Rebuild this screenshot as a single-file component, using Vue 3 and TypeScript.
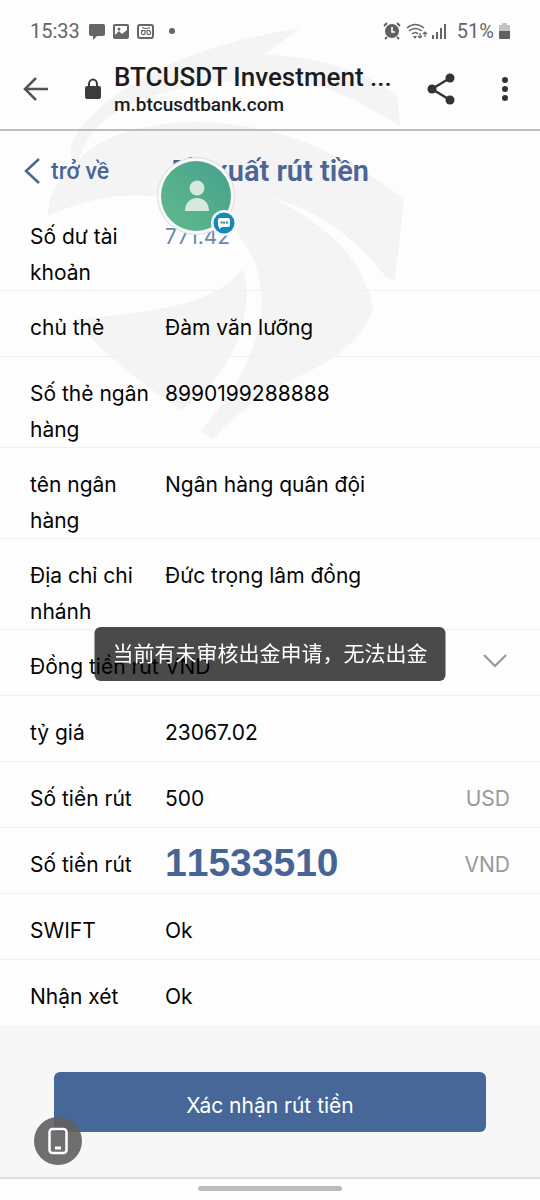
<script setup lang="ts">
import { ref } from 'vue'

type Kind = 'balance' | 'input' | 'select' | 'text' | 'total'

interface Field {
  id: string
  label: string
  value: string
  kind: Kind
  unit?: string
}

const fields = ref<Field[]>([
  { id: 'balance', label: 'Số dư tài khoản', value: '771.42', kind: 'balance' },
  { id: 'holder', label: 'chủ thẻ', value: 'Đàm văn lưỡng', kind: 'input' },
  { id: 'card', label: 'Số thẻ ngân hàng', value: '8990199288888', kind: 'input' },
  { id: 'bank', label: 'tên ngân hàng', value: 'Ngân hàng quân đội', kind: 'input' },
  { id: 'branch', label: 'Địa chỉ chi nhánh', value: 'Đức trọng lâm đồng', kind: 'input' },
  { id: 'currency', label: 'Đồng tiền rút', value: 'VND', kind: 'select' },
  { id: 'rate', label: 'tỷ giá', value: '23067.02', kind: 'text' },
  { id: 'amount', label: 'Số tiền rút', value: '500', kind: 'input', unit: 'USD' },
  { id: 'total', label: 'Số tiền rút', value: '11533510', kind: 'total', unit: 'VND' },
  { id: 'swift', label: 'SWIFT', value: 'Ok', kind: 'input' },
  { id: 'note', label: 'Nhận xét', value: 'Ok', kind: 'input' },
])
</script>

<template>
  <div class="screen">
    <svg class="watermark" width="420" height="450" viewBox="0 0 420 450" aria-hidden="true">
      <g fill="#f4f4f4">
        <path d="M300 28C240 38 190 52 145 77C105 99 78 125 71 146C69 158 74 164 79 160C84 137 104 116 134 103C178 84 240 78 292 80C335 86 365 105 400 126L397 95C367 72 315 55 264 55Z" />
        <path d="M79 160C100 136 145 122 195 122C275 122 345 153 404 199L395 280L386 277C352 234 318 211 270 197C320 220 350 250 362 277C369 292 373 302 373 311C360 341 335 359 304 374C273 388 242 407 213 439L200 431C237 390 261 347 262 300C260 247 228 214 180 200C134 190 91 196 48 216C48 193 60 175 79 160Z" />
        <path d="M243 269C217 300 175 311 76 319C93 344 119 365 151 389L181 410C222 383 247 339 247 286Z" />
      </g>
    </svg>

    <div class="status">
      <span>15:33</span>
      <svg class="notices" width="90" height="20" viewBox="0 0 90 20" aria-hidden="true">
        <path fill="#666" d="M2 3h13q2 0 2 2v8q0 2-2 2H9l-4 4v-4H3q-2 0-2-2V5q0-2 1-2z" />
        <path fill="#666" fill-rule="evenodd" d="M27 3h12q2 0 2 2v11q0 2-2 2H27q-2 0-2-2V5q0-2 2-2zm0 2v9l4-4 3 3 5-4V5z" />
        <circle cx="31" cy="8" r="1.5" fill="#666" />
        <rect x="50" y="4" width="15" height="13" rx="2" fill="none" stroke="#666" stroke-width="2" />
        <path fill="none" stroke="#666" stroke-width="1.200" d="M54 6.500l3 1h2l3-1M53 9.500h4v2a1.800 1.800 0 1 1-2-1.500M62 9.500h-3v2a1.800 1.800 0 1 0 2-1.500" />
        <circle cx="84" cy="10" r="3" fill="#666" />
      </svg>
      <svg class="signals" width="66" height="20" viewBox="0 0 66 20" aria-hidden="true">
        <circle cx="9" cy="10" r="7" fill="#606060" />
        <path d="M9 6v5h3" fill="none" stroke="#fff" stroke-width="1.600" />
        <path d="M1 5l3-3M14 2l3 3M4 16l-2 2M14 16l2 2" stroke="#606060" stroke-width="1.800" />
        <path d="M24 7q8-7 17 0M26 10q6-5 13 0M29 13q4-3 6 0" fill="none" stroke="#666" stroke-width="1.500" />
        <path d="M30 15h4l-2 3z" fill="#666" />
        <path d="M37 12v5M35 15l2 2 2-2M42 16v-5M40 13l2-2 2 2" fill="none" stroke="#666" stroke-width="1.200" />
        <path d="M50 14v4M54 11v7M58 7v11M62 3v15" stroke="#666" stroke-width="2" />
      </svg>
      <span>51%</span>
      <svg class="battery" width="11" height="17" viewBox="0 0 11 17" aria-hidden="true">
        <path d="M3 0h5v2h3v6H0V2h3z" fill="#c4c4c4" />
        <path d="M0 8h11v7q0 1-1 1H1q-1 0-1-1z" fill="#606060" />
      </svg>
    </div>

    <header class="browser">
      <button class="icon" type="button" aria-label="Back">
        <svg width="26" height="24" viewBox="0 0 26 24"><path d="M13 1L2 12l11 11M2 12h23" fill="none" stroke="#555" stroke-width="2.500" /></svg>
      </button>
      <svg class="lock" width="18" height="22" viewBox="0 0 18 22" aria-hidden="true">
        <path d="M5 9V6a4 4.500 0 0 1 8 0v3" fill="none" stroke="#3c3c3c" stroke-width="2" />
        <rect x="1" y="8" width="16" height="13" rx="2" fill="#3c3c3c" />
      </svg>
      <div class="site">
        <div class="site-title">BTCUSDT Investment ...</div>
        <div class="site-url">m.btcusdtbank.com</div>
      </div>
      <button class="icon" type="button" aria-label="Share">
        <svg width="28" height="32" viewBox="0 0 28 32">
          <path d="M23 5L5 16l18 11" fill="none" stroke="#333" stroke-width="2.500" />
          <g fill="#333"><circle cx="23" cy="5" r="4.500" /><circle cx="5" cy="16" r="4.500" /><circle cx="23" cy="27" r="4.500" /></g>
        </svg>
      </button>
      <button class="icon more" type="button" aria-label="Menu">
        <svg width="8" height="26" viewBox="0 0 8 26" fill="#333"><circle cx="4" cy="4" r="3" /><circle cx="4" cy="13" r="3" /><circle cx="4" cy="22" r="3" /></svg>
      </button>
    </header>

    <nav class="page-head">
      <a class="return" href="#">
        <svg width="17" height="28" viewBox="0 0 17 28" aria-hidden="true"><path d="M15 2L2 14l13 12" fill="none" stroke="#4c6597" stroke-width="2.500" /></svg>
        trở về
      </a>
      <h1>Đề xuất rút tiền</h1>
    </nav>

    <form @submit.prevent>
      <div v-for="f in fields" :key="f.id" class="row">
        <label :for="f.id">{{ f.label }}</label>
        <input v-if="f.kind === 'input'" :id="f.id" v-model="f.value" type="text" />
        <select v-else-if="f.kind === 'select'" :id="f.id" v-model="f.value">
          <option>VND</option>
        </select>
        <output v-else :id="f.id" :class="f.kind">{{ f.value }}</output>
        <svg v-if="f.kind === 'select'" class="chevron" width="24" height="15" viewBox="0 0 24 15" aria-hidden="true">
          <path d="M1 2l11 11L23 2" fill="none" stroke="#999" stroke-width="2.200" />
        </svg>
        <span v-if="f.unit" class="unit">{{ f.unit }}</span>
      </div>
      <div class="actions">
        <button class="submit" type="submit">Xác nhận rút tiền</button>
      </div>
    </form>

    <footer class="gesture"><div class="handle"></div></footer>

    <button class="support" type="button" aria-label="Support">
      <svg width="84" height="84" viewBox="0 0 84 84">
        <defs>
          <linearGradient id="avatar" x1="1" y1="0" x2="0" y2="1">
            <stop offset="0" stop-color="#46a08e" />
            <stop offset="1" stop-color="#60bb8b" />
          </linearGradient>
        </defs>
        <circle cx="40" cy="40" r="39" fill="#dedede" />
        <circle cx="40" cy="40" r="38" fill="#fafafa" />
        <circle cx="40" cy="40" r="35" fill="url(#avatar)" />
        <circle cx="41" cy="32" r="7.500" fill="#d5e9dd" />
        <path d="M29 55c0-8 5-13 12-13s12 5 12 13z" fill="#d5e9dd" />
        <circle cx="68" cy="67" r="13" fill="#eefaff" />
        <circle cx="68" cy="67" r="10.500" fill="#1988b7" />
        <path d="M64 62h8q2 0 2 2v5q0 2-2 2h-6l-3 2v-2q-1-1-1-2v-5q0-2 2-2z" fill="#fff" />
        <path d="M64.500 66.500h2M67 66.500h2M70 66.500h2" stroke="#1988b7" stroke-width="2" />
      </svg>
    </button>
    <div class="toast" role="alert">当前有未审核出金申请，无法出金</div>
    <button class="device" type="button" aria-label="Device">
      <svg width="20" height="28" viewBox="0 0 20 28"><rect x="1.500" y="2" width="17" height="24" rx="3" fill="none" stroke="#fff" stroke-width="2.500" /><path d="M7 21h6" stroke="#fff" stroke-width="3" /></svg>
    </button>
  </div>
</template>

<style>
body {
  background: #fdfdfd;
}
</style>

<style scoped>
.screen {
  position: relative;
  isolation: isolate;
  display: flex;
  flex-direction: column;
  min-height: 100vh;
  font-family: Inter, "Liberation Sans", "Noto Sans CJK SC", sans-serif;
  font-size: 21px;
  color: #050505;
}
.watermark {
  position: absolute;
  top: 0;
  left: 0;
  z-index: -1;
}
button {
  border: 0;
  font: inherit;
  cursor: pointer;
}
.status {
  display: flex;
  align-items: center;
  height: 48px;
  padding: 14px 30px 0;
  box-sizing: border-box;
  font: 20px/34px Roboto, sans-serif;
  color: #666;
}
.notices {
  margin-left: 8px;
}
.signals {
  margin: 0 8px 0 auto;
}
.battery {
  margin-left: 5px;
}
.browser {
  display: flex;
  align-items: center;
  height: 83px;
  padding: 0 31px 0 23px;
  border-bottom: 2px solid #bdbdbd;
  box-sizing: border-box;
}
.icon {
  display: flex;
  padding: 0;
  background: none;
}
.lock {
  margin: 0 12px 0 35px;
}
.site {
  flex: 1;
  font-family: Roboto, sans-serif;
  font-weight: 500;
  color: #1c1c1c;
}
.site-title {
  font-size: 26px;
  line-height: 32px;
  white-space: nowrap;
}
.site-url {
  font-size: 19px;
  line-height: 24px;
}
.more {
  margin-left: 46px;
}
.page-head {
  display: grid;
  grid-template-columns: 1fr auto 1fr;
  align-items: center;
  height: 68px;
  padding: 12px 24px 0;
  box-sizing: border-box;
  font-family: Roboto, sans-serif;
  color: #4c6597;
}
.return {
  display: flex;
  align-items: center;
  gap: 10px;
  color: inherit;
  font-size: 23px;
  font-weight: 500;
  text-decoration: none;
}
h1 {
  margin: 0;
  font-size: 29px;
  line-height: 36px;
  font-weight: 600;
}
form {
  flex: 1;
  display: flex;
  flex-direction: column;
}
.row {
  display: grid;
  grid-template-columns: 135px 1fr auto;
  align-items: start;
  min-height: 66px;
  padding: 19px 30px 0;
  border-top: 1px solid #f0f0f0;
  box-sizing: border-box;
  line-height: 36px;
}
.row:first-child {
  border-color: transparent;
}
label {
  margin: 0 0 -1px;
}
input,
select {
  width: 100%;
  min-width: 0;
  height: 36px;
  padding: 0;
  border: 0;
  background: none;
  appearance: none;
  font: inherit;
  line-height: 36px;
  color: inherit;
  outline: 0;
}
.balance {
  color: #6689ae;
}
.total {
  font-family: "Liberation Sans", sans-serif;
  font-size: 39px;
  font-kerning: none;
  line-height: 32px;
  font-weight: 700;
  color: #466596;
}
.unit {
  color: #999;
}
.chevron {
  margin: 4px 3px 0 0;
}
.actions {
  flex: 1;
  padding: 47px 10% 40px;
  background: #f7f7f7;
}
.submit {
  width: 100%;
  height: 60px;
  padding: 6px 0 0;
  border-radius: 6px;
  background: #476799;
  color: #fff;
}
.gesture {
  display: flex;
  justify-content: center;
  height: 23px;
  padding-top: 7px;
  border-top: 2px solid #ddd;
  box-sizing: border-box;
  background: #fdfdfd;
}
.handle {
  width: 144px;
  height: 5px;
  border-radius: 3px;
  background: #bbb;
}
.support {
  position: absolute;
  top: 156px;
  left: 156px;
  display: flex;
  padding: 0;
  background: none;
}
.toast {
  position: fixed;
  top: 627px;
  left: 50%;
  transform: translateX(-50%);
  padding: 0 18px;
  border-radius: 6px;
  background: rgba(0, 0, 0, 0.71);
  color: #fff;
  font-size: 21px;
  line-height: 54px;
  white-space: nowrap;
}
.device {
  position: fixed;
  bottom: 35px;
  left: 34px;
  display: grid;
  place-items: center;
  width: 48px;
  height: 48px;
  padding: 0;
  border-radius: 50%;
  background: rgba(95, 95, 95, 0.9);
}
</style>
